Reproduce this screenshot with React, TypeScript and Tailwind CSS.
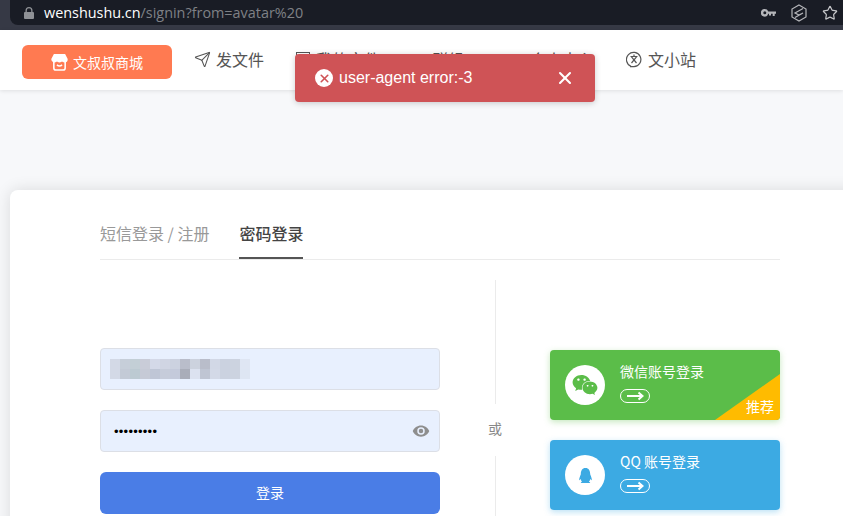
import { FaWeixin, FaQq } from "react-icons/fa";
import { Send, Star, X } from "lucide-react";

const cjk = "font-['Noto_Sans_CJK_SC','Liberation_Sans',sans-serif]";

// blurred account name, one row per 10px
const mosaic = [
  ["#d3d9e6", "#c6ced9", "#c3cfd6", "#c9ccd8", "#d4d9e8", "#d0d5e3", "#ccd2e0", "#b9bdca", "#ccd2de", "#b9bdca", "#d2d8e6", "#cbd2e0", "#ccd3e0", "#dfe6f3"],
  ["#d3d9e6", "#c3cad6", "#bccad2", "#c6cad6", "#bfc6d6", "#c6ccda", "#c4cadb", "#a9adb9", "#dce2f0", "#bfc5d3", "#d3d9e7", "#cbd2e0", "#ccd3e0", "#dee6f3"],
];

function Mosaic() {
  return (
    <svg width="140" height="20" viewBox="0 0 140 20" className="block">
      {mosaic.map((row, y) =>
        row.map((c, x) => <rect key={`${x}-${y}`} x={x * 10} y={y * 10} width="10" height="10" fill={c} />)
      )}
    </svg>
  );
}

function ShopIcon() {
  return (
    <svg width="17" height="17" viewBox="1 1 16 16.500" fill="none" stroke="white" strokeWidth="1.500">
      <path d="M3.5 8v6.5a2 2 0 0 0 2 2h7a2 2 0 0 0 2-2V8" />
      <path d="M4 1.8h10l2.2 4.2c0 1.5-1.2 2.4-2.4 2.4-1 0-1.8-.5-2.4-1.3-.5.8-1.4 1.3-2.4 1.3s-1.9-.5-2.4-1.3c-.6.8-1.4 1.3-2.4 1.3C3 8.4 1.800 7.500 1.800 6z" fill="white" />
      <path d="M6.500 11.500c1.500 1.300 3.500 1.300 5 0" />
    </svg>
  );
}

function StationIcon() {
  return (
    <svg width="16" height="17" viewBox="0 0 16 17" fill="none" stroke="#555" strokeWidth="1.2">
      <path d="M5 15.200A7.200 7.200 0 1 1 8 15.700H4" />
      <path d="M4.500 5.500h7M5.500 5.800l5 6.200M10.500 5.800l-5 6.200M8 3.600v1.900" />
    </svg>
  );
}

function NavItem({ icon, label, className }: { icon: React.ReactNode; label: string; className?: string }) {
  return (
    <div className={`-mt-[2px] flex items-center gap-[6px] text-[16px] text-[#555] ${className ?? ""}`}>
      {icon}
      <span>{label}</span>
    </div>
  );
}

function SocialCard({ label, icon, bg, shadow, children }: { label: string; icon: React.ReactNode; bg: string; shadow: string; children?: React.ReactNode }) {
  return (
    <div className={`relative flex h-[70px] w-[230px] items-center overflow-hidden rounded pl-[15px] ${bg} ${shadow}`}>
      <div className="flex h-10 w-10 items-center justify-center rounded-full bg-white">{icon}</div>
      <div className="mb-[6px] ml-[15px] flex flex-col">
        <span className="text-[14px] leading-[20px] text-white">{label}</span>
        <span className="mt-[8px] flex h-[14px] w-[30px] items-center justify-center rounded-full border border-white">
          <svg width="17" height="10" viewBox="0 0 17 10" fill="none" stroke="white" strokeWidth="2">
            <path d="M0 5h15.500M11.500 1.500 15.500 5l-4 3.500" />
          </svg>
        </span>
      </div>
      {children}
    </div>
  );
}

export default function App() {
  return (
    <div className={`relative flex h-[516px] w-[843px] flex-col overflow-hidden bg-[#f7f8fa] ${cjk}`}>
      {/* browser chrome */}
      <div className="h-[30px] shrink-0 bg-[#363945] pl-[10px]">
        <div className="flex h-[25px] items-center rounded-bl-lg bg-[#191c25] pl-[14px] pr-[5px]">
          <svg width="10" height="12" viewBox="0 0 10 12" fill="#8f9196">
            <path d="M1.500 5V3.500a3.500 3.500 0 0 1 7 0V5h.5a1 1 0 0 1 1 1v5a1 1 0 0 1-1 1H1a1 1 0 0 1-1-1V6a1 1 0 0 1 1-1zm1.300 0h4.400V3.500a2.200 2.200 0 0 0-4.400 0z" />
          </svg>
          <div className="ml-[10px] font-['Open_Sans',sans-serif] text-[14.400px]">
            <span className="text-white">wenshushu.cn</span>
            <span className="text-[#7f8186]">/signin?from=avatar%20</span>
          </div>
          <div className="ml-auto flex items-center gap-[15px]">
            <svg width="15" height="8" viewBox="0 0 15 8" fill="#b5b6ba">
              <path d="M3.800 0a3.800 3.800 0 0 1 3.500 2.400H15v2.400h-1.300V7h-2V4.800H10V6.500H8V4.800h-.7A3.800 3.800 0 1 1 3.800 0zm0 2.300a1.500 1.500 0 1 0 0 3 1.500 1.500 0 0 0 0-3z" />
            </svg>
            <svg width="16" height="18" viewBox="0 0 16 18" fill="none" stroke="#b5b6ba" strokeWidth="1.200">
              <path d="M8 1l7 4v8l-7 4-7-4V5z" />
              <path d="M12 4.500 4 9l4 2 4-2M4 13.500 12 9" />
            </svg>
            <Star size={16} color="#c5c6c9" strokeWidth={1.800} />
          </div>
        </div>
      </div>

      {/* site header */}
      <header className="relative flex h-[60px] shrink-0 items-center bg-white pl-[22px] shadow-[0_1px_4px_rgba(0,0,0,0.1)]">
        <div className="mt-[4px] flex h-[34px] w-[150px] items-center justify-center gap-[5px] rounded-md bg-[#ff7a51] text-[14px] text-white">
          <ShopIcon />
          <span>文叔叔商城</span>
        </div>
        <NavItem className="ml-[22px]" icon={<Send size={17} color="#555" strokeWidth={1.500} className="-mr-px" />} label="发文件" />
        <NavItem className="ml-[32px]" icon={<span className="h-[14px] w-[14px] border border-[#555]" />} label="我的文件" />
        <NavItem className="ml-[32px]" icon={<span className="h-[14px] w-[14px]" />} label="群组" />
        <NavItem className="ml-[46px]" icon={<span className="h-[14px] w-[14px]" />} label="个人中心" />
        <NavItem className="ml-[32px]" icon={<StationIcon />} label="文小站" />
      </header>

      {/* login card */}
      <main className="pl-[10px] pt-[100px]">
        <div className="h-[400px] w-[900px] rounded-lg bg-white pl-[90px] pt-[31px] shadow-[0_0_16px_rgba(0,0,0,0.12)]">
          <div className="flex w-[680px] gap-[30px] border-b border-[#ebebeb] text-[16px] leading-[24px]">
            <span className="pb-[14px] text-[#999]">短信登录 / 注册</span>
            <span className="border-b-2 border-[#555] pb-[12px] font-medium text-[#444]">密码登录</span>
          </div>

          <div className="mt-5 flex w-[680px]">
            <div className="flex w-[340px] flex-col gap-5 pt-[68px]">
              <div className="flex h-[42px] items-center rounded border border-[#dcdfe6] bg-[#e8f0fe] pl-[9px]">
                <Mosaic />
              </div>
              <div className="flex h-[42px] items-center justify-between rounded border border-[#dcdfe6] bg-[#e8f0fe] pl-[13px] pr-[9px]">
                <span className="mt-[2px] font-['Liberation_Sans',sans-serif] text-[13px] tracking-[0.25px] text-black">•••••••••</span>
                <svg width="18" height="18" viewBox="0 0 24 24" fill="#8e8e8e">
                  <path d="M12 4.500C7 4.500 2.700 7.600 1 12c1.700 4.400 6 7.500 11 7.500s9.300-3.100 11-7.500c-1.700-4.400-6-7.500-11-7.500zM12 17a5 5 0 1 1 0-10 5 5 0 0 1 0 10zm0-8a3 3 0 1 0 0 6 3 3 0 0 0 0-6z" />
                </svg>
              </div>
              <div className="flex h-[42px] items-center justify-center rounded-md bg-[#4a7de6] pb-[2px] text-[14px] text-white">登录</div>
            </div>

            <div className="flex w-[110px] flex-col items-center">
              <div className="h-[124px] w-px bg-[#ebebeb]" />
              <div className="flex h-[52px] items-center pb-[4px] text-[14px] text-[#888]">或</div>
              <div className="h-[60px] w-px bg-[#ebebeb]" />
            </div>

            <div className="flex w-[230px] flex-col gap-5 pt-[70px]">
              <SocialCard
                label="微信账号登录"
                bg="bg-[#5bbd49]"
                shadow="shadow-[0_2px_6px_rgba(91,189,73,0.35)]"
                icon={<FaWeixin size={26} color="#5bbd49" />}
              >
                <div className="absolute bottom-0 right-0 h-[46px] w-[65px] bg-[#ffbb00] [clip-path:polygon(100%_0,100%_100%,0_100%)]" />
                <span className="absolute bottom-[4px] right-[6px] text-[14px] leading-[20px] text-white">推荐</span>
              </SocialCard>
              <SocialCard
                label="QQ 账号登录"
                bg="bg-[#3caae3]"
                shadow="shadow-[0_2px_6px_rgba(60,170,227,0.35)]"
                icon={<FaQq size={15} color="#3caae3" />}
              />
            </div>
          </div>
        </div>
      </main>

      {/* error toast */}
      <div className="absolute left-[295px] top-[54px] flex h-[48px] w-[300px] items-center rounded bg-[#cf5356] pl-[20px] pr-[20px] shadow-[0_1px_6px_rgba(0,0,0,0.2)]">
        <span className="flex h-[18px] w-[18px] items-center justify-center rounded-full bg-white">
          <X size={13} color="#cf5356" strokeWidth={3} />
        </span>
        <span className="ml-[6px] font-['Liberation_Sans',sans-serif] text-[16px] text-white">user-agent error:-3</span>
        <X size={20} color="white" strokeWidth={2.500} className="ml-auto" />
      </div>
    </div>
  );
}
